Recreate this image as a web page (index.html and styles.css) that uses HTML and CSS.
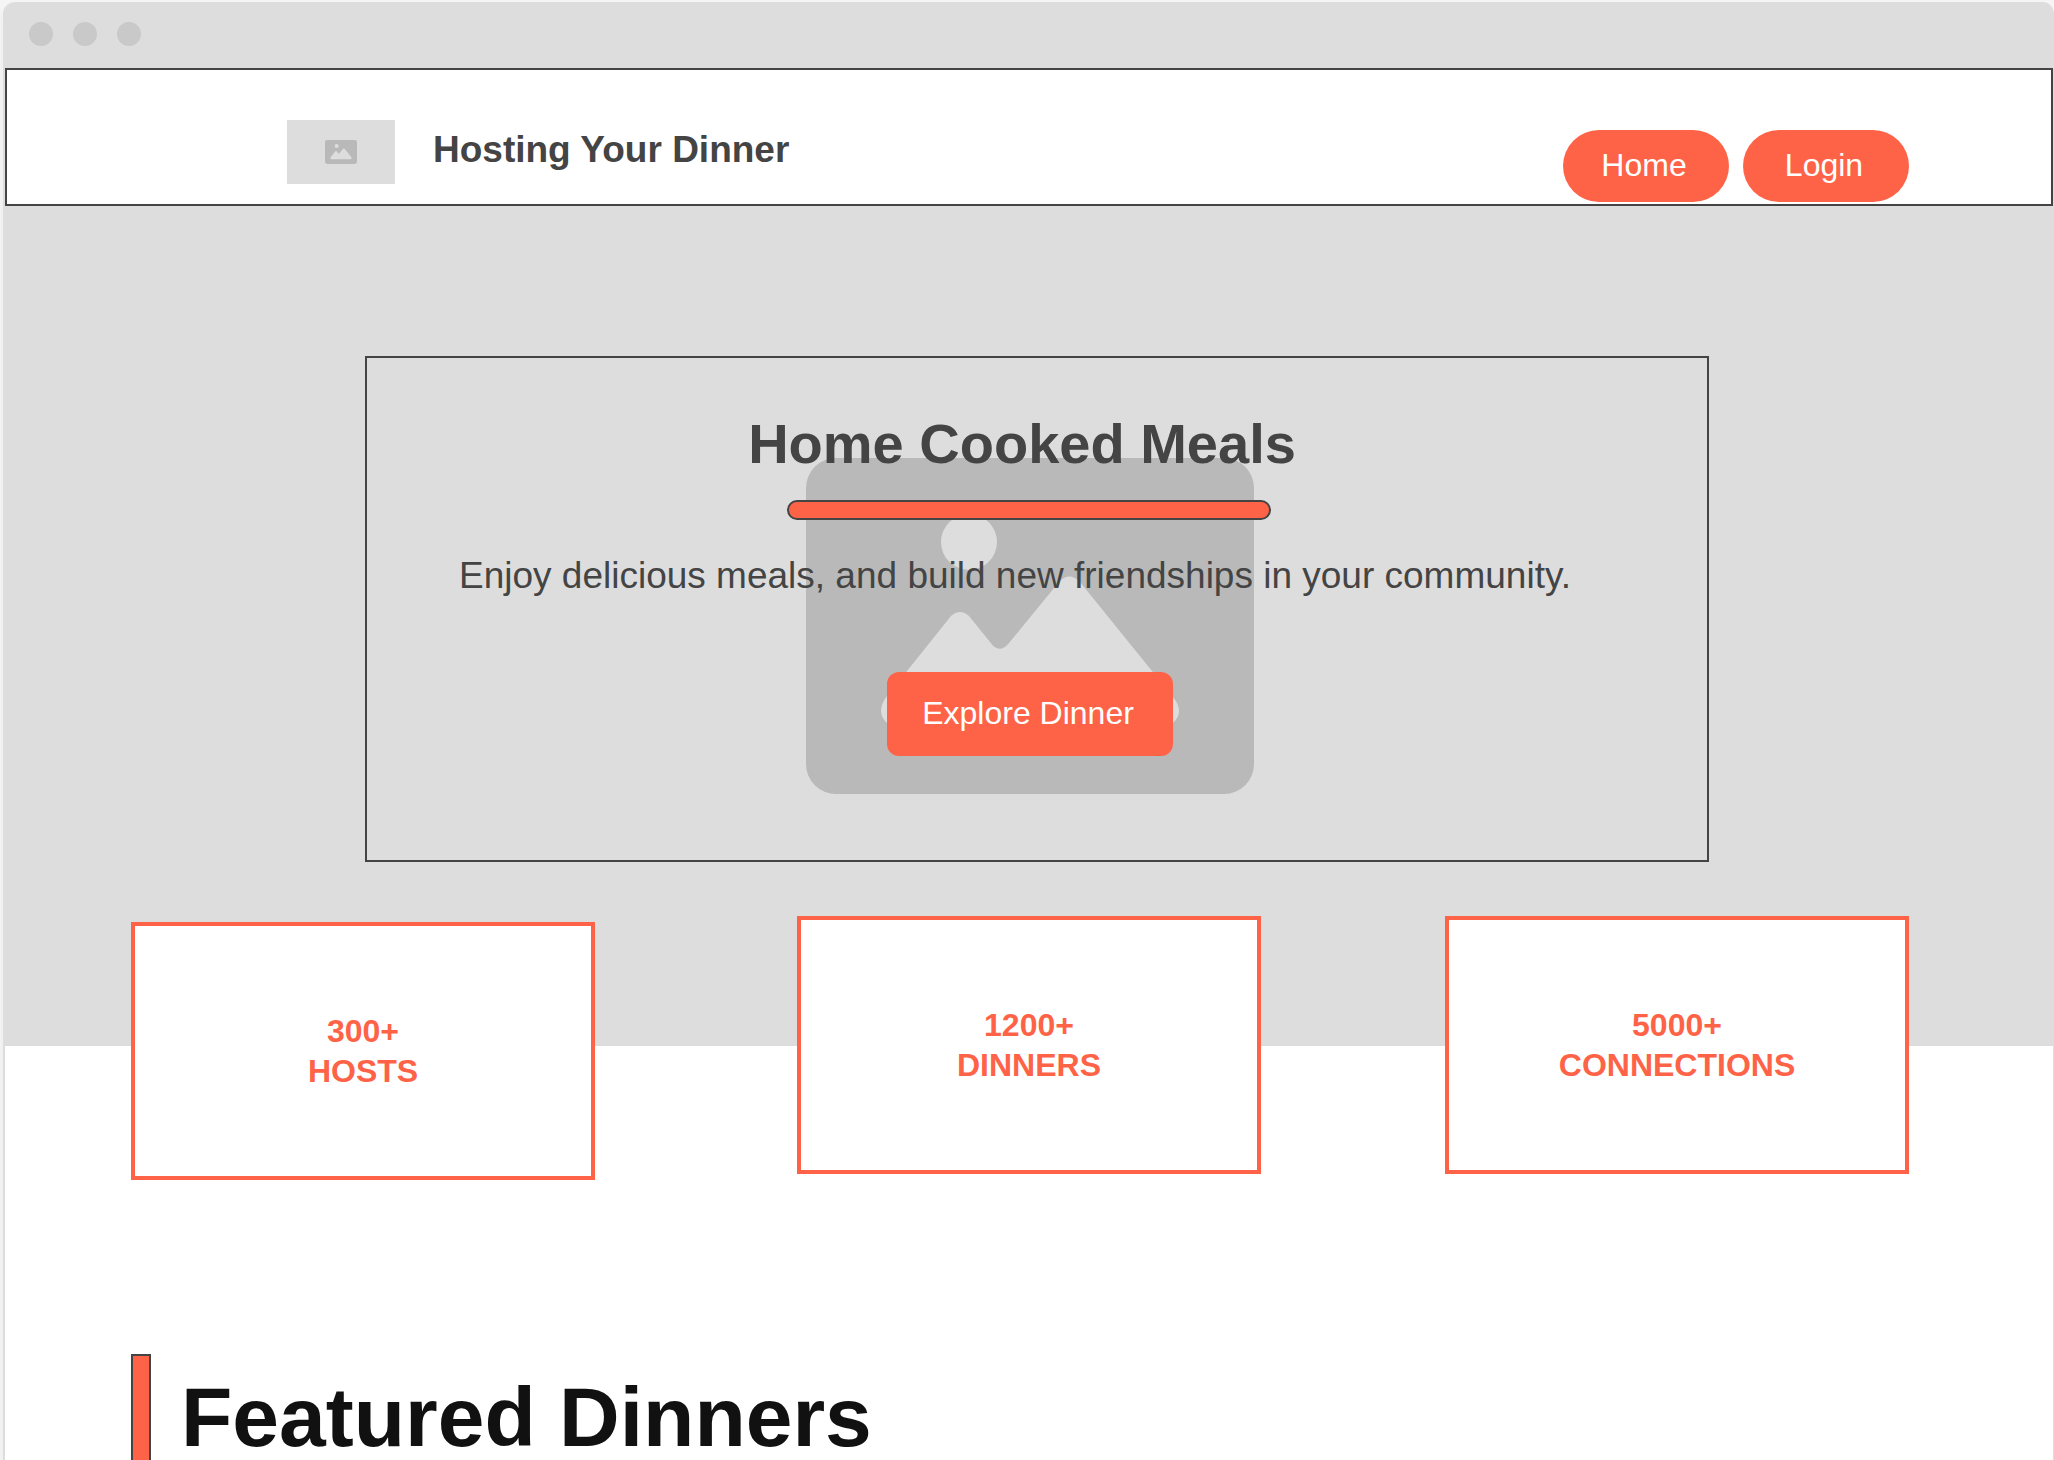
FILE: index.html
```html
<!DOCTYPE html>
<html lang="en">
<head>
  <meta charset="utf-8">
  <meta name="viewport" content="width=device-width, initial-scale=1">
  <title>Hosting Your Dinner</title>
  <link rel="stylesheet" href="styles.css">
</head>
<body>
  <svg class="sprite" aria-hidden="true">
    <symbol id="picture" viewBox="0 0 448 336">
      <path class="picture-frame" d="M30 0H418A30 30 0 0 1 448 30V306A30 30 0 0 1 418 336H30A30 30 0 0 1 0 306V30A30 30 0 0 1 30 0Z"/>
      <circle class="picture-hole" cx="163" cy="84" r="28"/>
      <path class="picture-hole" d="M145 158Q154 150 163 158L184 184Q193 197 203 185L253 124Q263 113 274 124L367 239Q379 254 367 265Q362 269 355 269H93Q86 269 81 265Q69 254 81 238Z"/>
    </symbol>
  </svg>
  <div class="window">
    <div class="titlebar">
      <span class="dot"></span>
      <span class="dot"></span>
      <span class="dot"></span>
    </div>
    <header class="header">
      <div class="brand">
        <div class="logo"><svg class="logo-icon" role="img" aria-label="Logo"><use href="#picture"/></svg></div>
        <span class="brand-name">Hosting Your Dinner</span>
      </div>
      <nav class="nav">
        <button class="pill" type="button">Home</button>
        <button class="pill" type="button">Login</button>
      </nav>
    </header>
    <main>
      <section class="hero">
        <svg class="hero-picture" aria-hidden="true"><use href="#picture"/></svg>
        <div class="hero-box">
          <h1 class="hero-title">Home Cooked Meals</h1>
          <div class="hero-rule"></div>
          <p class="hero-text">Enjoy delicious meals, and build new friendships in your community.</p>
          <button class="cta" type="button">Explore Dinner</button>
        </div>
      </section>
      <section class="stats">
        <div class="stat stat-lowered"><span>300+</span><span>HOSTS</span></div>
        <div class="stat"><span>1200+</span><span>DINNERS</span></div>
        <div class="stat"><span>5000+</span><span>CONNECTIONS</span></div>
      </section>
      <section class="featured">
        <h2 class="featured-title">Featured Dinners</h2>
      </section>
    </main>
  </div>
</body>
</html>
```

FILE: styles.css
```css
:root {
  --accent: #ff6347;
  --ink: #444;
  --grey: #ddd;
}

*,
*::before {
  box-sizing: border-box;
}

body {
  margin: 0;
  padding: 2px 0 0 3px;
  background: #f5f5f5;
  color: var(--ink);
  font-family: "Liberation Sans", Arial, sans-serif;
}

button {
  border: 0;
  padding: 0 4px 2px 0;
  background: var(--accent);
  color: #fff;
  font: inherit;
  font-size: 32px;
  cursor: pointer;
}

.sprite {
  position: absolute;
  width: 0;
  height: 0;
}

.picture-frame {
  fill: #b9b9b9;
}

.picture-hole {
  fill: var(--grey);
}

/* Browser window frame */
.window {
  border: solid var(--grey);
  border-width: 0 1px 0 2px;
  border-radius: 12px 12px 0 0;
  background: #fff;
  box-shadow: 0 8px 10px rgba(0, 0, 0, 0.05);
}

.titlebar {
  display: flex;
  gap: 20px;
  padding: 20px 24px 22px;
  border-radius: 10px 10px 0 0;
  background: var(--grey);
}

.dot {
  width: 24px;
  height: 24px;
  border-radius: 50%;
  background: #c9c9c9;
}

/* Site header */
.header {
  display: flex;
  justify-content: space-between;
  padding: 50px 142px 2px 280px;
  border: 2px solid var(--ink);
}

.brand {
  display: flex;
  align-items: flex-start;
  gap: 38px;
}

.logo {
  display: grid;
  place-items: center;
  width: 108px;
  height: 64px;
  background: var(--grey);
}

.logo-icon {
  width: 32px;
  height: 24px;
}

.brand-name {
  font-size: 37px;
  font-weight: 700;
  line-height: 60px;
}

.nav {
  display: flex;
  gap: 14px;
  padding-top: 10px;
}

.pill {
  width: 166px;
  height: 72px;
  border-radius: 36px;
}

/* Hero: the picture and the framed copy share one grid cell */
.hero {
  display: grid;
  padding: 150px 344px 184px 360px;
  background: var(--grey);
}

.hero-picture,
.hero-box {
  grid-area: 1 / 1;
}

.hero-picture {
  width: 448px;
  height: 336px;
  margin: 102px 14px 0 0;
  justify-self: center;
}

.hero-box {
  display: flex;
  flex-direction: column;
  align-items: center;
  padding: 54px 16px 104px 0;
  border: 2px solid var(--ink);
}

.hero-title {
  margin: 0 14px 24px 0;
  font-size: 56px;
  line-height: 64px;
}

.hero-rule {
  width: 484px;
  max-width: 100%;
  height: 20px;
  border: 2px solid var(--ink);
  border-radius: 10px;
  background: var(--accent);
}

.hero-text {
  margin: 36px 28px 76px 0;
  font-size: 37px;
  line-height: 40px;
}

.cta {
  width: 286px;
  height: 84px;
  margin-left: 2px;
  border-radius: 12px;
}

/* Figures overlapping the lower edge of the hero */
.stats {
  display: flex;
  justify-content: space-between;
  align-items: flex-start;
  margin-top: -130px;
  padding: 0 144px 0 126px;
}

.stat {
  display: flex;
  flex-direction: column;
  align-items: center;
  width: 464px;
  padding: 85px 0;
  border: 4px solid var(--accent);
  background: #fff;
  color: var(--accent);
  font-size: 32px;
  font-weight: 700;
  line-height: 40px;
}

.stat-lowered {
  margin: 6px 18px 0 0;
}

/* Featured dinners */
.featured {
  display: flex;
  gap: 30px;
  padding: 174px 144px 0 126px;
}

.featured::before {
  content: "";
  width: 20px;
  border: 2px solid var(--ink);
  border-bottom: 0;
  background: var(--accent);
}

.featured-title {
  margin: 0;
  padding-top: 20px;
  color: #111;
  font-size: 84px;
  line-height: 86px;
}
```
